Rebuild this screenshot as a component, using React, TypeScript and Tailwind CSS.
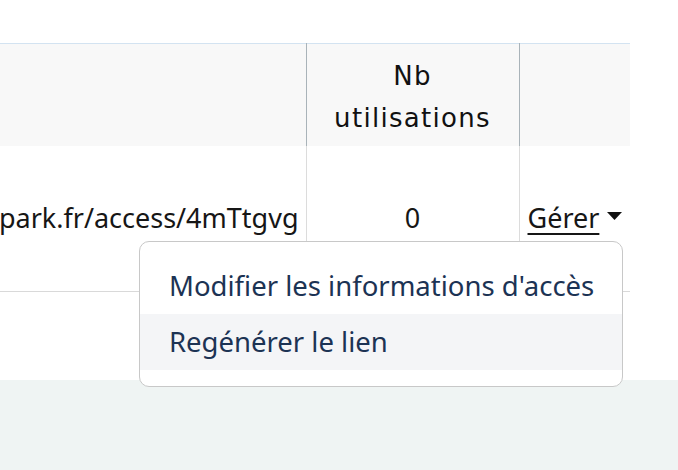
import React from "react";

export default function App() {
  return (
    <div className="w-[678px] h-[470px] overflow-hidden bg-[#eff4f3]" style={{ fontFamily: '"Noto Sans", sans-serif' }}>
      <div className="relative w-[688px] bg-white rounded-br-[10px] pt-[43px] pb-[88px]">
        <table className="w-[630px] border-collapse table-fixed">
          <colgroup>
            <col className="w-[306px]" />
            <col className="w-[213px]" />
            <col className="w-[111px]" />
          </colgroup>
          <thead>
            <tr className="bg-[#f8f8f8] h-[102px] border-t border-[#d3e3f1]">
              <th className="border-r border-[#a9b3b9]"></th>
              <th className="border-r border-[#a9b3b9] text-center font-normal text-[26px] leading-[42px] tracking-[1.3px] text-[#111] pt-[4px]" style={{ fontFamily: '"DejaVu Sans", sans-serif' }}>
                Nb
                <br />
                utilisations
              </th>
              <th></th>
            </tr>
          </thead>
          <tbody>
            <tr className="h-[146px] border-b border-[#d9d9d9]">
              <td className="border-r border-[#dcdcdc] pr-[7px] text-[27px] text-[#161616]">
                <div className="flex justify-end overflow-hidden">
                  <span className="whitespace-nowrap">https://app.zenpark.fr/access/4mTtgvg</span>
                </div>
              </td>
              <td className="border-r border-[#dcdcdc] text-center text-[27px] text-[#161616]">0</td>
              <td className="text-[27px] text-[#161616] pl-[8px]">
                <span className="inline-flex items-center gap-[8px] whitespace-nowrap">
                  <span className="underline underline-offset-[5px] decoration-[2px]">Gérer</span>
                  <svg width="15" height="8" viewBox="0 0 15 8" className="mt-[-4px] shrink-0">
                    <path d="M0 0 L15 0 L7.5 8 Z" fill="#111" />
                  </svg>
                </span>
              </td>
            </tr>
          </tbody>
        </table>

        <div className="absolute left-[139px] top-[241px] w-[484px] h-[146px] bg-white border border-[#c8c8c8] rounded-[10px] py-[16px] overflow-hidden">
          <div className="h-[56px] flex items-center pl-[29px] text-[27.5px] text-[#1c3354] whitespace-nowrap">
            Modifier les informations d'accès
          </div>
          <div className="h-[56px] flex items-center pl-[29px] text-[27.5px] text-[#1c3354] bg-[#f4f5f7] whitespace-nowrap">
            Regénérer le lien
          </div>
        </div>
      </div>
    </div>
  );
}
